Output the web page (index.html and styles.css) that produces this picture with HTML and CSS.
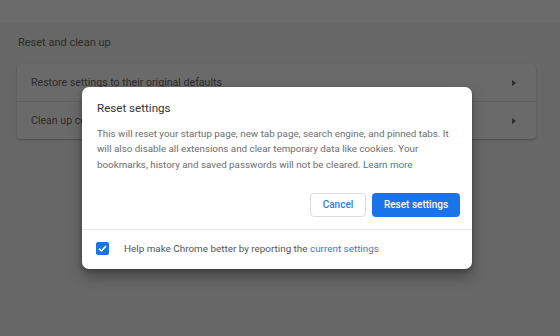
FILE: index.html
```html
<!DOCTYPE html>
<html>
<head>
	<title>Settings - Reset settings</title>
	<meta charset="utf-8">
	<link rel="stylesheet" href="styles.css">
</head>
<body>
	<div class="page">
		<header class="toolbar"></header>
		<main class="content">
			<h2 class="section-title">Reset and clean up</h2>
			<div class="card">
				<div class="row">
					<span>Restore settings to their original defaults</span>
					<span class="arrow"></span>
				</div>
				<div class="row">
					<span>Clean up computer</span>
					<span class="arrow"></span>
				</div>
			</div>
		</main>
	</div>

	<div class="dialog">
		<div class="dialog-body">
			<h3 class="dialog-title">Reset settings</h3>
			<p class="dialog-text">This will reset your startup page, new tab page, search engine, and pinned tabs. It will also disable all extensions and clear temporary data like cookies. Your bookmarks, history and saved passwords will not be cleared. <a href="">Learn more</a></p>
			<div class="buttons">
				<button class="btn cancel">Cancel</button>
				<button class="btn action">Reset settings</button>
			</div>
		</div>
		<div class="dialog-footer">
			<span class="checkbox">
				<svg width="11" height="11" viewBox="0 0 12 12"><path d="M2.2 6.2 L4.8 8.7 L9.8 3.4" fill="none" stroke="#fff" stroke-width="1.7"/></svg>
			</span>
			<span>Help make Chrome better by reporting the <a href="">current settings</a></span>
		</div>
	</div>
</body>
</html>
```

FILE: styles.css
```css
body {
	margin: 0;
	background: #666766;
	font-family: Roboto, "Liberation Sans", Arial, sans-serif;
	overflow: hidden;
}
.page {
	width: 560px;
	height: 336px;
}
.toolbar {
	height: 22px;
	background: #6a6b6a;
}
.content {
	padding: 0 24px 0 17px;
}
.section-title {
	margin: 0;
	padding: 14px 0 0 1px;
	height: 28px;
	font-size: 11px;
	font-weight: 400;
	line-height: 14px;
	color: #2c2c2c;
}
.card {
	background: #6a6a6a;
	border-radius: 4px;
	box-shadow: 0 1px 2px rgba(0,0,0,0.25);
}
.row {
	height: 37px;
	display: flex;
	align-items: center;
	justify-content: space-between;
	padding: 0 20px 0 14px;
	font-size: 10.6px;
	color: #2c2c2c;
}
.row + .row {
	border-top: 1px solid #5f5f5f;
}
.arrow {
	width: 0;
	height: 0;
	border-top: 3.5px solid transparent;
	border-bottom: 3.5px solid transparent;
	border-left: 4px solid #2c2c2c;
}

/* dialog */
.dialog {
	position: absolute;
	left: 82px;
	top: 87px;
	width: 390px;
	height: 182px;
	background: #fff;
	border-radius: 7px;
	box-shadow: 0 8px 14px rgba(0,0,0,0.3), 0 2px 4px rgba(0,0,0,0.2);
	display: flex;
	flex-direction: column;
}
.dialog-body {
	padding: 13px 12px 12px 15px;
	border-bottom: 1px solid #e6e6e6;
}
.dialog-title {
	margin: 0;
	font-size: 11.6px;
	font-weight: 400;
	line-height: 16px;
	color: #333;
}
.dialog-text {
	margin: 10px 0 0;
	font-size: 9.8px;
	line-height: 15.3px;
	color: #6e6e6e;
}
a {
	color: #3a78d6;
	text-decoration: none;
}
.buttons {
	display: flex;
	justify-content: flex-end;
	gap: 6px;
	margin-top: 21px;
}
.btn {
	height: 24px;
	border-radius: 4px;
	font-family: inherit;
	font-size: 10px;
	font-weight: 500;
	padding: 0;
}
.cancel {
	width: 56px;
	background: #fff;
	color: #3a78d6;
	border: 1px solid #dadce0;
}
.action {
	width: 88px;
	background: #1a73e8;
	color: #fff;
	border: none;
}
.dialog-footer {
	flex: 1;
	display: flex;
	align-items: center;
	padding: 0 0 2px 14px;
	font-size: 9.9px;
	color: #555;
}
.checkbox {
	width: 13px;
	height: 13px;
	border-radius: 2px;
	background: #1a73e8;
	display: flex;
	align-items: center;
	justify-content: center;
	margin-right: 15px;
}
```
